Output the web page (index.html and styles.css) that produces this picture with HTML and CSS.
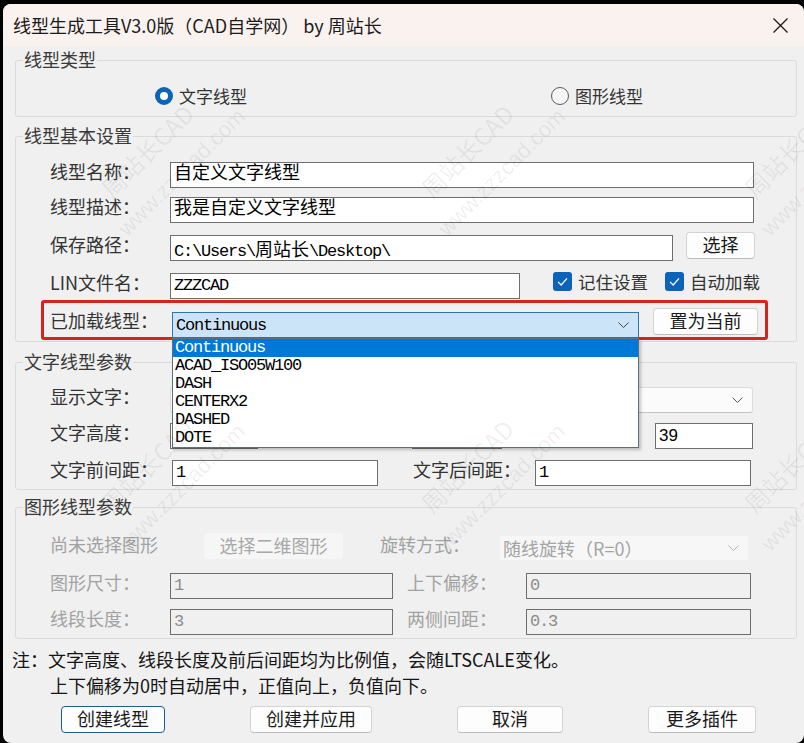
FILE: index.html
```html
<!DOCTYPE html>
<html lang="zh-CN">
<head>
  <meta charset="UTF-8" />
  <title>线型生成工具V3.0版（CAD自学网） by 周站长</title>
  <link rel="stylesheet" href="styles.css">
</head>
<body>

<div class="win">
  <div class="titlebar">
    <span class="title">线型生成工具V3.0版（CAD自学网） by 周站长</span>
    <svg class="close" width="15" height="15" viewBox="0 0 15 15">
      <path d="M0.5 0.5 L14.5 14.5 M14.5 0.5 L0.5 14.5" stroke="#1a1a1a" stroke-width="1.3" fill="none"/>
    </svg>
  </div>

  <div class="groups">
    <fieldset class="g-type">
      <legend>线型类型</legend>
      <div class="radio-row">
        <label class="radio on"><i></i>文字线型</label>
        <label class="radio"><i></i>图形线型</label>
      </div>
    </fieldset>

    <fieldset class="g-base">
      <legend>线型基本设置</legend>
      <div class="row h27">
        <span class="lbl">线型名称：</span>
        <div class="field zh w-long">自定义文字线型</div>
      </div>
      <div class="row h27 mt8">
        <span class="lbl">线型描述：</span>
        <div class="field zh w-long">我是自定义文字线型</div>
      </div>
      <div class="row h29 mt9 top">
        <span class="lbl lbl-path">保存路径：</span>
        <div class="field w-path">C:\Users\<span class="zh">周站长</span>\Desktop\</div>
        <button class="btn btn-pick">选择</button>
      </div>
      <div class="row h27 mt11 top">
        <span class="lbl lbl-lin">LIN文件名：</span>
        <div class="field w-lin">ZZZCAD</div>
        <label class="check first"><i><svg width="19" height="19" viewBox="0 0 19 19"><path d="M5 9.8 L8.2 13 L14 6.4" stroke="#fff" stroke-width="1.2" fill="none"/></svg></i>记住设置</label>
        <label class="check"><i><svg width="19" height="19" viewBox="0 0 19 19"><path d="M5 9.8 L8.2 13 L14 6.4" stroke="#fff" stroke-width="1.2" fill="none"/></svg></i>自动加载</label>
      </div>
      <div class="current-row">
        <span class="lbl">已加载线型：</span>
        <div class="combo-wrap">
          <div class="combo active">
            <span>Continuous</span>
            <svg width="11" height="6" viewBox="0 0 11 6"><polyline points="0.5,0.5 5.5,5.5 10.5,0.5" stroke="#444" fill="none"/></svg>
          </div>
          <ul class="dropdown">
            <li class="sel">Continuous</li>
            <li>ACAD_ISO05W100</li>
            <li>DASH</li>
            <li>CENTERX2</li>
            <li>DASHED</li>
            <li>DOTE</li>
          </ul>
        </div>
        <button class="btn btn-current">置为当前</button>
      </div>
    </fieldset>

    <fieldset class="g-text">
      <legend>文字线型参数</legend>
      <div class="row h26">
        <span class="lbl">显示文字：</span>
        <div class="combo plain w-show">
          <span></span>
          <svg width="11" height="6" viewBox="0 0 11 6"><polyline points="0.5,0.5 5.5,5.5 10.5,0.5" stroke="#555" fill="none"/></svg>
        </div>
      </div>
      <div class="row h26 mt10">
        <span class="lbl">文字高度：</span>
        <div class="field w-height"></div>
        <span class="spacer w-gap1"></span>
        <div class="field w-mid"></div>
        <span class="spacer w-gap2"></span>
        <div class="field sans w-angle">39</div>
      </div>
      <div class="row h26 mt11">
        <span class="lbl lbl-wide">文字前间距：</span>
        <div class="field w-before">1</div>
        <span class="lbl lbl-after">文字后间距：</span>
        <div class="field w-after">1</div>
      </div>
    </fieldset>

    <fieldset class="g-shape">
      <legend>图形线型参数</legend>
      <div class="row h29 mt16 top">
        <span class="lbl off lbl-none">尚未选择图形</span>
        <button class="btn off btn-shape">选择二维图形</button>
        <span class="lbl off lbl-rot">旋转方式：</span>
        <div class="combo off w-rot">
          <span class="zh">随线旋转（R=0）</span>
          <svg width="11" height="6" viewBox="0 0 11 6"><polyline points="0.5,0.5 5.5,5.5 10.5,0.5" stroke="#b5b5b5" fill="none"/></svg>
        </div>
      </div>
      <div class="row h26 mt12">
        <span class="lbl off">图形尺寸：</span>
        <div class="field off w-size">1</div>
        <span class="lbl off lbl-right">上下偏移：</span>
        <div class="field off w-size2">0</div>
      </div>
      <div class="row h26 mt10">
        <span class="lbl off">线段长度：</span>
        <div class="field off w-size">3</div>
        <span class="lbl off lbl-right">两侧间距：</span>
        <div class="field off w-size2">0.3</div>
      </div>
    </fieldset>
  </div>

  <div class="notes">
    <p>注：文字高度、线段长度及前后间距均为比例值，会随LTSCALE变化。</p>
    <p class="indent">上下偏移为0时自动居中，正值向上，负值向下。</p>
  </div>

  <div class="actions">
    <button class="btn default w-create">创建线型</button>
    <button class="btn w-apply">创建并应用</button>
    <button class="btn w-cancel">取消</button>
    <button class="btn w-more">更多插件</button>
  </div>

  <!-- watermark -->
  <div class="wm">
    <div class="wm-tile t1"><b>周站长CAD</b><span>www.zzzcad.com</span></div>
    <div class="wm-tile t2"><b>周站长CAD</b><span>www.zzzcad.com</span></div>
    <div class="wm-tile t3"><b>周站长CAD</b><span>www.zzzcad.com</span></div>
    <div class="wm-tile t4"><b>周站长CAD</b><span>www.zzzcad.com</span></div>
    <div class="wm-tile t5"><b>周站长CAD</b><span>www.zzzcad.com</span></div>
    <div class="wm-tile t6"><b>周站长CAD</b><span>www.zzzcad.com</span></div>
  </div>
</div>

</body>
</html>
```

FILE: styles.css
```css
body {
  margin: 0;
  background: #000;
  font-family: "Noto Sans CJK SC", sans-serif;
  overflow: hidden;
}
.win {
  position: relative;
  margin: 4px 0 0 3px;
  width: 801px;
  height: 739px;
  background: #f0f0f0;
  border-radius: 8px;
  overflow: hidden;
}
.titlebar {
  height: 42px;
  background: #faf2ee;
  display: flex;
  align-items: center;
  justify-content: space-between;
  padding: 0 16px 0 10px;
}
.title {
  font-size: 18px;
  color: #1b1b1b;
}

/* group boxes */
.groups {
  padding: 0 7px 0 12px;
}
fieldset {
  margin: 0;
  padding: 0;
  min-width: 0;
  border: 1px solid #dadada;
  border-radius: 3px;
}
legend {
  margin-left: 7px;
  padding: 0 1px 2px;
  font-size: 18px;
  line-height: 16px;
  color: #3a3a3a;
}
.g-type { margin-top: 5px; padding-bottom: 6px; }
.g-base { margin-top: 10px; padding-bottom: 1px; }
.g-text { margin-top: 11px; padding-bottom: 3px; }
.g-shape { margin-top: 8px; padding-bottom: 3px; }

.radio-row {
  display: flex;
  align-items: center;
  height: 26px;
  margin-top: 15px;
  padding-left: 139px;
}
.radio {
  display: flex;
  align-items: center;
  font-size: 17px;
  line-height: 20px;
  padding-bottom: 2px;
  color: #333;
}
.radio:first-child { width: 396px; }
.radio i {
  width: 18px;
  height: 18px;
  box-sizing: border-box;
  border-radius: 50%;
  border: 1px solid #5a5a5a;
  background: #f7f7f7;
  margin-right: 6px;
}
.radio.on i {
  border: 5px solid #0c63b7;
  background: #fff;
}

.row {
  display: flex;
  align-items: center;
  padding-left: 34px;
  margin-top: 16px;
}
.row.top { align-items: flex-start; }
.h26 { height: 26px; }
.h27 { height: 27px; }
.h29 { height: 29px; }
.mt8 { margin-top: 8px; }
.mt9 { margin-top: 9px; }
.mt10 { margin-top: 10px; }
.mt11 { margin-top: 11px; }
.mt12 { margin-top: 12px; }
.mt16 { margin-top: 16px; }

.lbl {
  flex: none;
  width: 120px;
  font-size: 18px;
  line-height: 20px;
  padding-bottom: 8px;
  color: #333;
  white-space: nowrap;
}
.lbl.off { color: #a2a2a2; }
.lbl-path { margin-top: 2px; }
.lbl-lin { margin-top: 0; }
.lbl-wide { width: 122px; }
.lbl-after { width: 122px; margin-left: 35px; }
.lbl-none { width: 154px; margin-top: 2px; }
.lbl-rot { margin-left: 37px; margin-top: 2px; }
.lbl-right { width: 119px; margin-left: 14px; }
.spacer { flex: none; }

/* SimSun-like half-width digits: tall glyphs on a 9px pitch */
.field {
  flex: none;
  height: 26px;
  box-sizing: border-box;
  border: 1px solid #6e6e6e;
  background: #fff;
  padding: 0 3px;
  font-family: "Liberation Mono", "Noto Sans CJK SC", monospace;
  font-size: 17px;
  letter-spacing: -1.2px;
  line-height: 24px;
  color: #000;
  white-space: nowrap;
}
.zh {
  font-family: "Noto Sans CJK SC", sans-serif;
  font-size: 18px;
  letter-spacing: 0;
}
.field.zh {
  line-height: 16px;
  padding-bottom: 8px;
}
.field.sans {
  font-family: "Liberation Sans", sans-serif;
  font-size: 17px;
  letter-spacing: 0;
}
.field.off {
  background: #f0f0f0;
  color: #8c8c8c;
}
.w-long { width: 584px; }
.w-path { width: 503px; margin-top: 3px; }
.w-lin { width: 350px; margin-top: 1px; }
.w-height { width: 88px; }
.w-gap1 { width: 154px; }
.w-mid { width: 90px; }
.w-gap2 { width: 153px; }
.w-angle { width: 98px; }
.w-before { width: 206px; }
.w-after { width: 216px; }
.w-size { width: 223px; }
.w-size2 { width: 225px; }

.check {
  display: flex;
  align-items: center;
  height: 19px;
  font-size: 17.5px;
  color: #333;
  margin-left: 17px;
}
.check.first { margin-left: 33px; }
.check i {
  width: 19px;
  height: 19px;
  border-radius: 3px;
  background: #0c63b7;
  margin-right: 6px;
  display: flex;
}

.btn {
  flex: none;
  height: 27px;
  box-sizing: border-box;
  padding: 0 0 2px;
  border: 1px solid #d3d3d3;
  border-bottom-color: #bcbcbc;
  border-radius: 4px;
  background: #fdfdfd;
  font-family: "Noto Sans CJK SC", sans-serif;
  font-size: 18px;
  line-height: 23px;
  color: #1a1a1a;
}
.btn.off {
  background: #f6f6f6;
  border-color: #f6f6f6;
  color: #a8a8a8;
  height: 26px;
  margin-top: 1px;
}
.btn.default { border-color: #1e5b96; }
.btn-pick { width: 69px; margin-left: 13px; }
.btn-current { width: 105px; margin-left: 14px; margin-top: 5px; }
.btn-shape { width: 139px; }

/* the highlighted "loaded linetype" row */
.current-row {
  display: flex;
  align-items: flex-start;
  width: 727px;
  height: 40px;
  box-sizing: border-box;
  margin: 1px 0 0 25px;
  padding-left: 6px;
  border: 3px solid #d6231e;
  border-radius: 3px;
}
.current-row .lbl { width: 122px; margin-top: 7px; }

.combo-wrap {
  position: relative;
  margin-top: 9px;
}
.combo {
  flex: none;
  display: flex;
  align-items: center;
  justify-content: space-between;
  box-sizing: border-box;
  height: 26px;
  padding: 0 9px 0 3px;
  font-family: "Liberation Mono", monospace;
  font-size: 17px;
  letter-spacing: -1.2px;
}
.combo.active {
  width: 467px;
  background: #cce4f7;
  border: 1px solid #2f74b5;
}
.combo.plain {
  width: 583px;
  background: #fbfbfb;
  border: 1px solid #dcdcdc;
  border-bottom-color: #c4c4c4;
  border-radius: 3px;
}
.combo.off {
  width: 248px;
  height: 24px;
  margin-top: 4px;
  background: #f7f7f7;
  color: #a4a4a4;
}
.dropdown {
  position: absolute;
  left: 0;
  top: 100%;
  z-index: 5;
  width: 467px;
  box-sizing: border-box;
  margin: 0;
  padding: 0;
  list-style: none;
  background: #fff;
  border: 1px solid #5f6f80;
  box-shadow: 2px 2px 3px rgba(0, 0, 0, .22);
}
.dropdown li {
  height: 18px;
  line-height: 18px;
  padding-left: 2px;
  font-family: "Liberation Mono", monospace;
  font-size: 17px;
  letter-spacing: -1.2px;
  color: #000;
}
.dropdown li.sel {
  background: #0078d7;
  color: #fff;
}

.notes {
  margin-top: 7px;
  padding-left: 9px;
  font-size: 18px;
  line-height: 26px;
  color: #151515;
}
.notes p { margin: 0; }
.notes .indent { padding-left: 38px; }

.actions {
  display: flex;
  gap: 85px;
  margin-top: 8px;
  padding-left: 58px;
}
.w-create { width: 104px; }
.w-apply { width: 122px; }
.w-cancel { width: 106px; }
.w-more { width: 108px; }

/* faint diagonal watermark */
.wm {
  position: absolute;
  inset: 0;
  z-index: 10;
  pointer-events: none;
}
.wm-tile {
  position: absolute;
  transform: rotate(-45deg);
  transform-origin: 0 0;
  color: rgba(0, 0, 0, .07);
  white-space: nowrap;
}
.wm-tile b {
  display: block;
  padding-left: 16px;
  font-weight: 400;
  font-size: 24px;
  line-height: 28px;
}
.wm-tile span {
  display: block;
  margin-top: 12px;
  font-family: "Liberation Sans", sans-serif;
  font-size: 22px;
  line-height: 28px;
}
.t1 { left: 81px; top: 190px; }
.t2 { left: 401px; top: 190px; }
.t3 { left: 724px; top: 190px; }
.t4 { left: 81px; top: 505px; }
.t5 { left: 401px; top: 505px; }
.t6 { left: 724px; top: 505px; }
```
